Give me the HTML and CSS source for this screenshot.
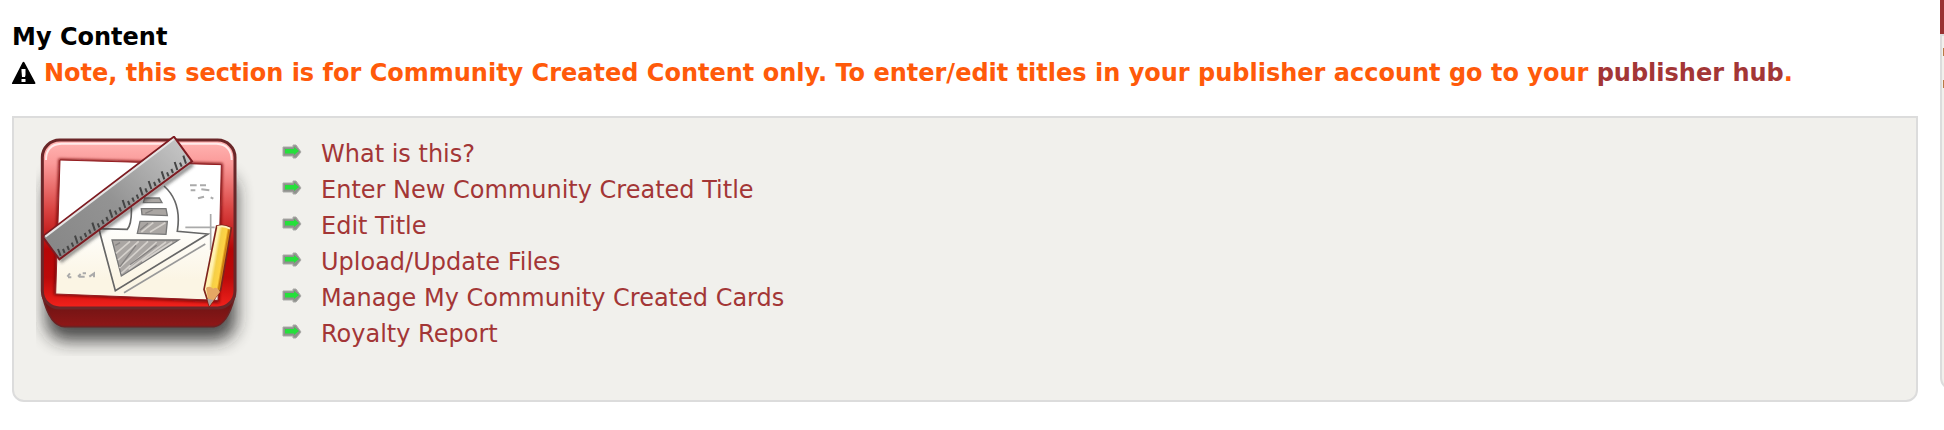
FILE: index.html
```html
<!DOCTYPE html>
<html lang="en">
<head>
<meta charset="utf-8">
<title>My Content</title>
<link rel="stylesheet" href="styles.css">
</head>
<body>
<svg class="defs" aria-hidden="true">
  <symbol id="arrow" viewBox="0 0 20 16">
    <path d="M1 3H11V1H14L19 8L14 14H11V12H1Z" fill="#8f918d" stroke="#aaaaa7" stroke-width="1"/>
    <path d="M3 5H12V3L17 7L12 11V9.500H3Z" fill="#25e03b"/>
  </symbol>
</svg>
<div class="page">
  <main class="main">
    <h1 class="heading">My Content</h1>
    <p class="note">
      <svg class="warning" viewBox="0 0 24 24" role="img" aria-label="Warning"><path fill="#000" fill-rule="evenodd" d="M10.500 1.500Q11.500 0 12.500 1.500L23.500 22Q23.500 23 22.500 23H.5Q-.5 23 0 22ZM9.500 8V10L10 16H13L13.500 14V8ZM9.500 18V21H13.500V18Z"/></svg>
      <span>Note, this section is for Community Created Content only. To enter/edit titles in your publisher account go to your <a class="hub" href="#hub">publisher hub</a>.</span>
    </p>
    <section class="panel">
      <svg class="picture" viewBox="48 48 660 660" aria-hidden="true">
        <defs>
          <linearGradient id="frame" x2="0" y2="1"><stop offset="0" stop-color="#ffb5b3"/><stop offset=".14" stop-color="#fb9a99"/><stop offset=".42" stop-color="#d94240"/><stop offset=".65" stop-color="#b60607"/><stop offset=".82" stop-color="#bc0a0a"/><stop offset="1" stop-color="#f3221c"/></linearGradient>
          <linearGradient id="base" x2="0" y2="1"><stop offset="0" stop-color="#651313"/><stop offset="1" stop-color="#8f1717"/></linearGradient>
          <linearGradient id="paper" x2="0" y2="1"><stop offset=".45" stop-color="#fff"/><stop offset=".85" stop-color="#fbf5e4"/></linearGradient>
          <linearGradient id="steel" gradientUnits="userSpaceOnUse" x1="480" y1="60" x2="120" y2="400"><stop offset="0" stop-color="#c5c5c5"/><stop offset=".55" stop-color="#939393"/><stop offset="1" stop-color="#888"/></linearGradient>
          <linearGradient id="pencil" gradientUnits="userSpaceOnUse" x1="580" y1="420" x2="620" y2="427"><stop offset="0" stop-color="#fff1b0"/><stop offset=".25" stop-color="#f4cf48"/><stop offset=".6" stop-color="#ffd344"/><stop offset=".75" stop-color="#c87a0a"/><stop offset="1" stop-color="#efac38"/></linearGradient>
          <filter id="shadow" x="-20%" y="-20%" width="140%" height="150%"><feGaussianBlur stdDeviation="25"/></filter>
          <filter id="soft" x="-20%" y="-20%" width="140%" height="140%"><feGaussianBlur stdDeviation="5"/></filter>
          <filter id="sketch" x="-20%" y="-20%" width="140%" height="140%"><feGaussianBlur stdDeviation="2"/></filter>
        </defs>
        <rect x="78" y="160" width="570" height="502" rx="60" fill="#222" opacity=".8" filter="url(#shadow)"/>
        <path d="M68 530Q90 620 134 620H582Q622 616 644 530Z" fill="url(#base)" stroke="#6d2223" stroke-width="5"/>
        <rect x="67" y="60" width="578" height="504" rx="52" fill="url(#frame)" stroke="#6b2729" stroke-width="9"/>
        <path d="M78 120Q78 73 124 71H590Q634 73 635 120" fill="none" stroke="#fff" stroke-opacity=".75" stroke-width="6"/>
        <path d="M116 116L608 130L598 548L102 525Z" fill="#770b0d" filter="url(#soft)"/>
        <path d="M120 120L604 134L594 541L107 522Z" fill="url(#paper)" stroke="#951c20" stroke-width="3"/>
        <g filter="url(#sketch)">
          <g fill="none" stroke="#666" stroke-width="5">
            <path d="M432 198Q486 246 472 334L564 342L286 512L240 340L238 326L322 328Q336 310 334 262"/>
            <path d="M556 372L312 518" stroke="#999"/>
            <path d="M572 282V390M496 322H584" stroke="#aaa"/>
          </g>
          <g fill="#aaa6a3" stroke="#777" stroke-width="4">
            <path d="M276 360H476L304 468Z"/>
            <path d="M360 304H442L438 343L352 340Z"/>
            <path d="M364 266H438L442 287L366 284Z"/>
            <path d="M374 234H418L426 248H370Z"/>
          </g>
          <path d="M288 400L330 364M294 420L356 364M298 444L384 364M304 460L410 366M326 448L438 366M366 424L456 366M364 336L400 308M390 336L436 308" stroke="#d5d1cc" stroke-width="5"/>
          <path d="M286 376L300 368M300 440L348 376M330 434L410 376M360 330L384 310M376 280L398 270" stroke="#868382" stroke-width="4"/>
          <g fill="none" stroke="#aaa" stroke-width="6">
            <path d="M510 196H530M540 196H558M512 211H526M544 208L568 211M534 235L552 230M572 232L580 236"/>
            <path d="M150 460L142 470M144 472H154M174 470L182 462M188 460H198M176 470H194M208 470L222 460V472"/>
          </g>
        </g>
        <path d="M120 424L518 132" stroke="#333" stroke-opacity=".5" stroke-width="14" filter="url(#soft)"/>
        <path d="M68 350L462 50L516 124L118 418Z" fill="url(#steel)" stroke="#7e1b21" stroke-width="6"/>
        <path d="M76 350L462 57" stroke="#e5e5e5" stroke-width="6"/>
        <path filter="url(#sketch)" fill="none" stroke="#444" stroke-width="6" d="M122 408l-8-21M134 399l-5-12M147 390l-5-12M160 380l-5-12M173 371l-8-24M186 361l-5-12M199 351l-5-12M212 341l-5-12M225 332l-8-24M238 322l-5-12M251 312l-5-12M264 303l-5-12M277 293l-8-24M290 284l-5-12M303 274l-5-12M316 264l-8-24M329 255l-5-12M342 245l-5-12M355 236l-5-12M368 226l-8-24M381 217l-5-12M394 207l-8-24M407 198l-5-12M420 188l-5-12M433 178l-8-24M446 169l-5-12M459 159l-5-12M472 150l-8-24M485 140l-5-12M498 131l-8-24"/>
        <path d="M590 318Q612 312 634 324L602 510L568 558L552 508Z" fill="url(#pencil)" stroke="#7e241c" stroke-width="5"/>
        <path d="M558 504L568 558L600 516Q590 498 580 506Q568 496 558 504Z" fill="#e5a764"/>
        <path d="M562 536L568 558L580 540Z" fill="#a9a09c"/>
        <path d="M592 321Q610 314 630 326" fill="none" stroke="#fff2bd" stroke-width="6"/>
      </svg>
      <ul class="links">
        <li><svg class="arrow" aria-hidden="true"><use href="#arrow"/></svg><a href="#what">What is this?</a></li>
        <li><svg class="arrow" aria-hidden="true"><use href="#arrow"/></svg><a href="#enter">Enter New Community Created Title</a></li>
        <li><svg class="arrow" aria-hidden="true"><use href="#arrow"/></svg><a href="#edit">Edit Title</a></li>
        <li><svg class="arrow" aria-hidden="true"><use href="#arrow"/></svg><a href="#upload">Upload/Update Files</a></li>
        <li><svg class="arrow" aria-hidden="true"><use href="#arrow"/></svg><a href="#cards">Manage My Community Created Cards</a></li>
        <li><svg class="arrow" aria-hidden="true"><use href="#arrow"/></svg><a href="#royalty">Royalty Report</a></li>
      </ul>
    </section>
  </main>
  <aside class="side">
    <div class="side-title"></div>
    <div class="side-body"><i class="mark"></i><i class="mark"></i></div>
  </aside>
</div>
</body>
</html>
```
FILE: styles.css
```css
* { box-sizing: border-box; }
body {
  margin: 0;
  background: #fff;
  font: 24px/36px Verdana, "DejaVu Sans", sans-serif;
}
a { color: #a33636; text-decoration: none; }
.defs { display: none; }
.page {
  display: grid;
  grid-template-columns: minmax(0, 1fr) 4px;
  column-gap: 22px;
  padding-left: 12px;
  align-items: start;
}
.main { padding-top: 19px; }
.heading { margin: 0; font-size: 24px; }
.note {
  display: flex;
  align-items: center;
  gap: 8px;
  margin: 0 0 25px;
  color: #ff5a0a;
  font-weight: bold;
}
.warning { flex: none; width: 24px; height: 24px; overflow: visible; }
.panel {
  display: flex;
  gap: 26px;
  padding: 18px 22px 44px;
  background: #f1f0ec;
  border: 2px solid #dcdcdc;
  border-radius: 0 0 12px 12px;
}
.picture { flex: none; width: 220px; height: 220px; }
.links { margin: 0; padding: 0; list-style: none; }
.links li { display: flex; align-items: center; gap: 19px; }
.arrow { flex: none; width: 20px; height: 16px; margin-bottom: 4px; }
.side { overflow: hidden; }
.side-title { height: 34px; background: #993233; }
.side-body {
  display: flex;
  flex-direction: column;
  gap: 24px;
  width: 300px;
  height: 356px;
  padding: 12px 1px;
  background: #f1f0ec;
  border: 2px solid #dcdcdc;
  border-radius: 0 0 0 12px;
}
.mark { width: 8px; height: 8px; background: #b87a45; }
```
